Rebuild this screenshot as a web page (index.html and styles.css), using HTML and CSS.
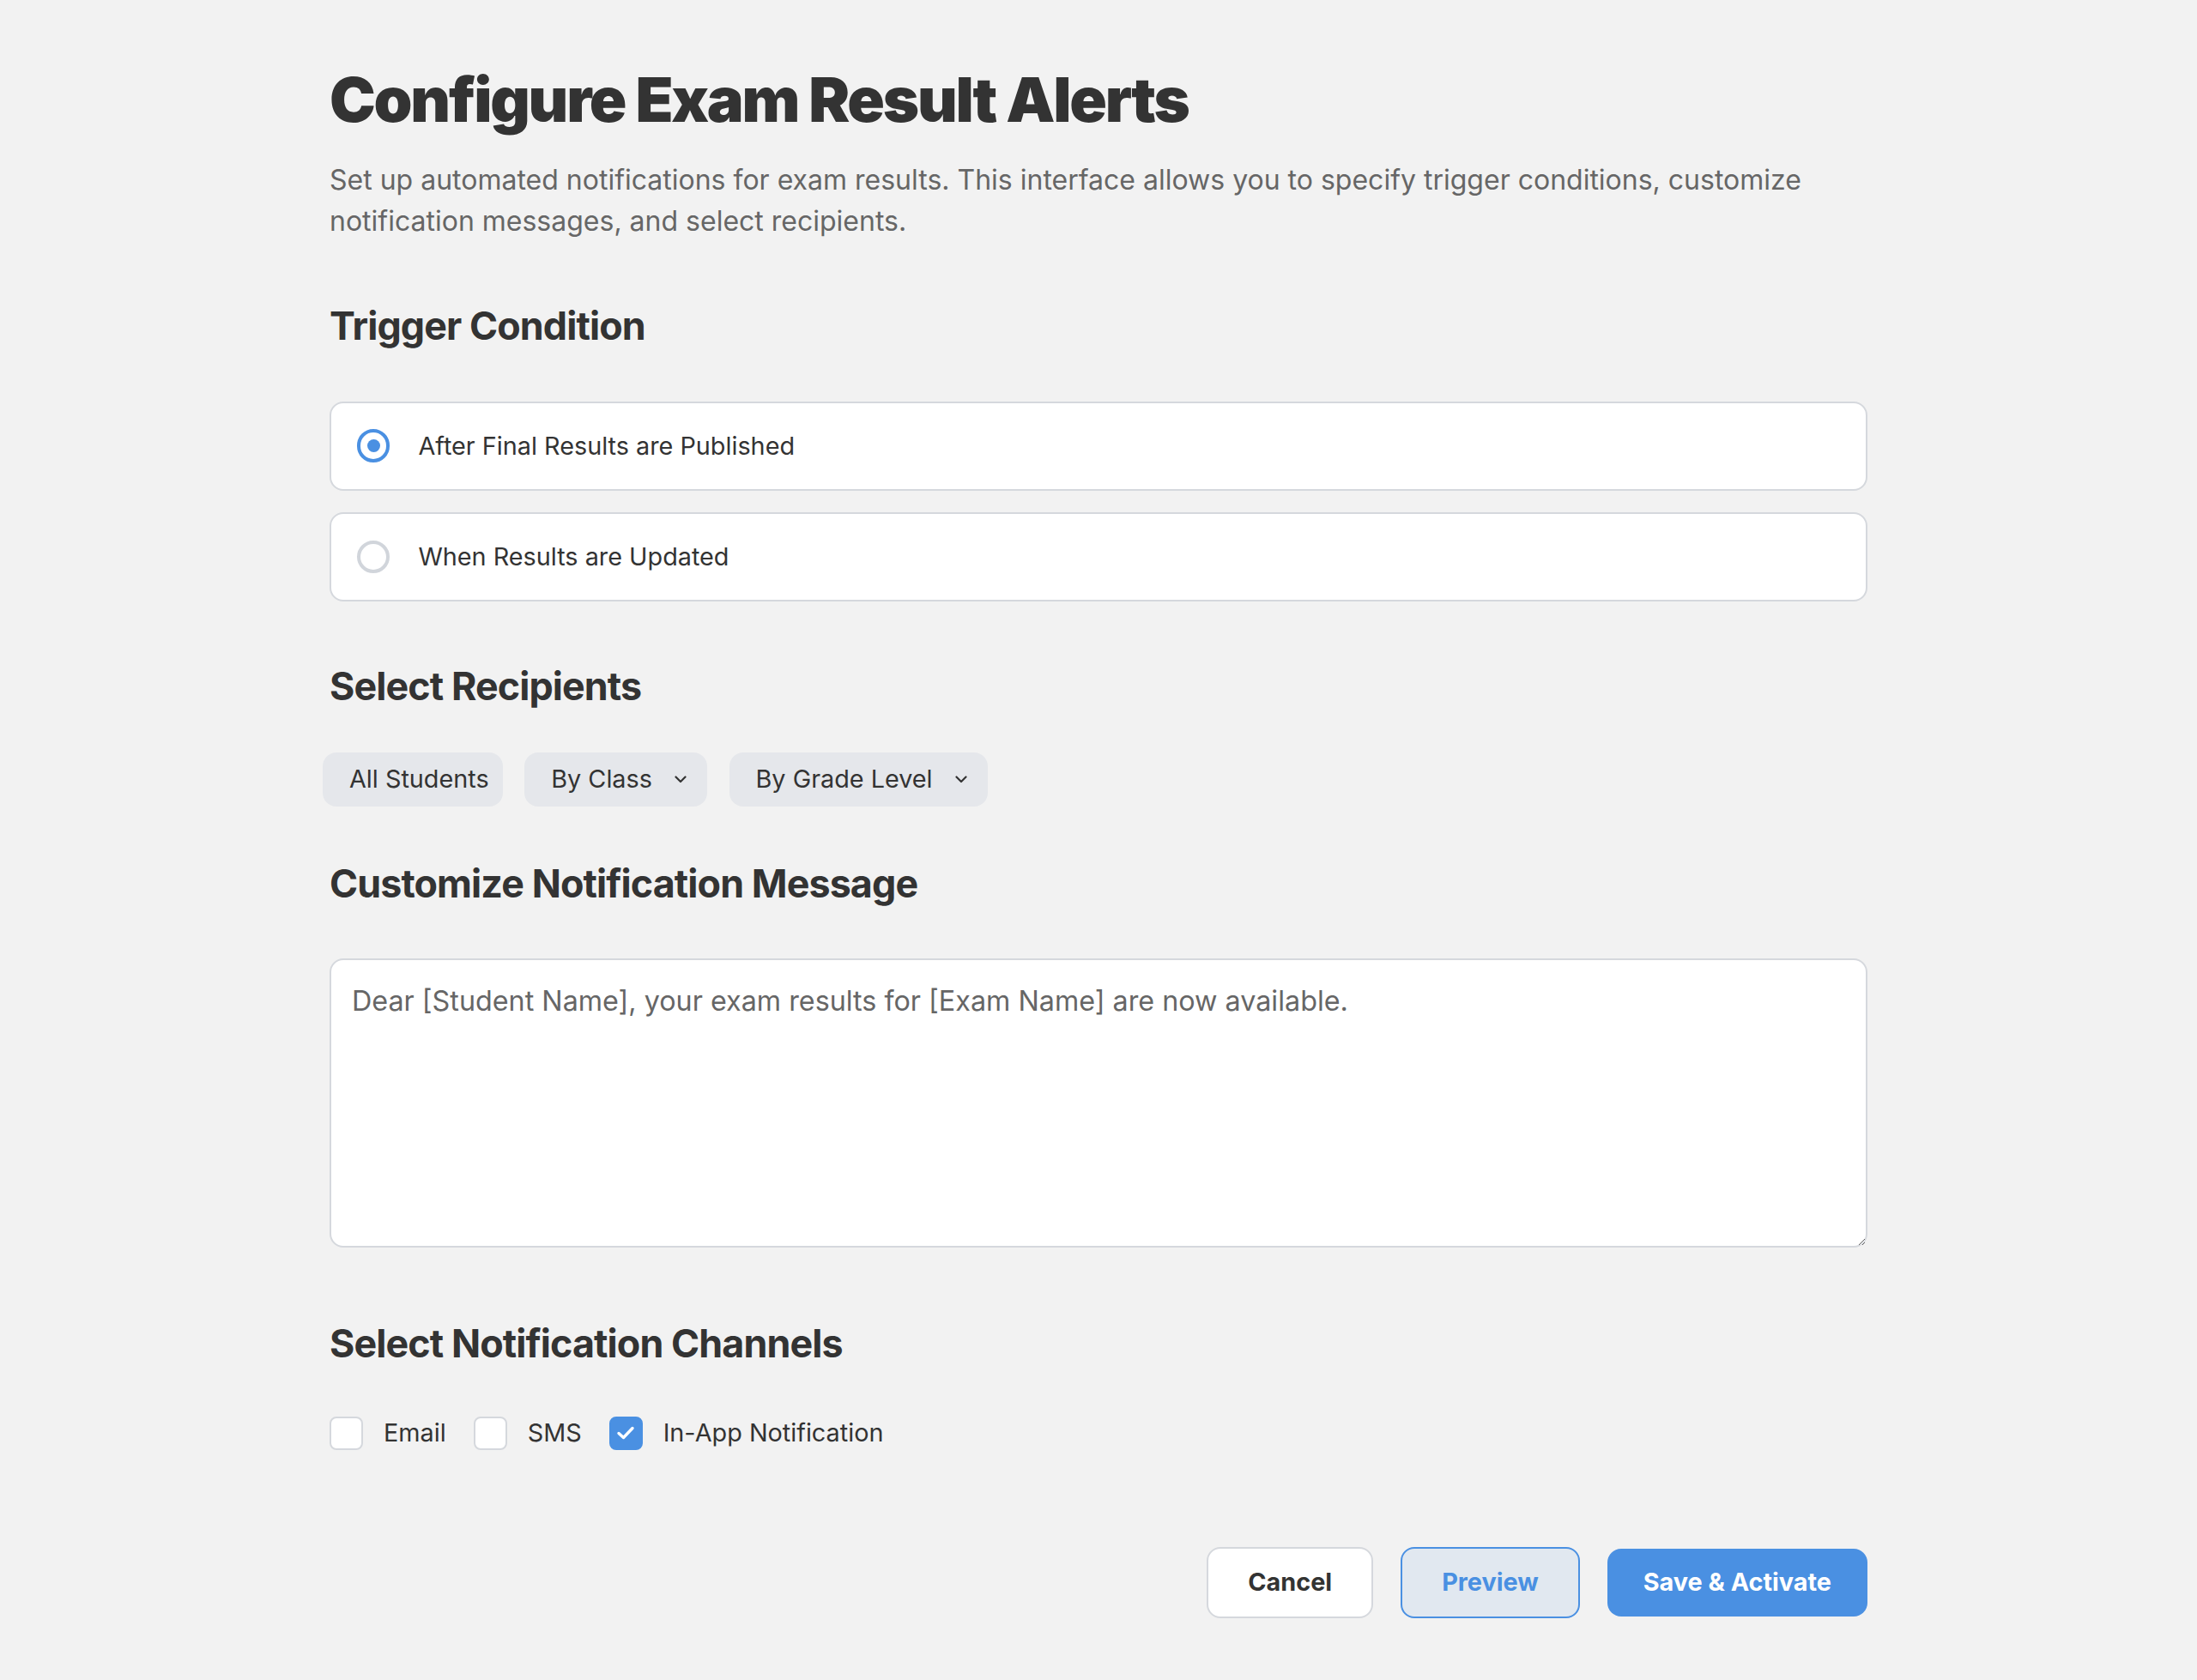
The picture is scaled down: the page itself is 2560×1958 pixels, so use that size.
FILE: index.html
```html
<!DOCTYPE html>
<html lang="en">
<head>
<meta charset="utf-8">
<title>Configure Exam Result Alerts</title>
<link rel="stylesheet" href="styles.css">
</head>
<body>
<main class="page">
  <h1 class="title">Configure Exam Result Alerts</h1>
  <p class="intro">Set up automated notifications for exam results. This interface allows you to specify trigger conditions, customize notification messages, and select recipients.</p>

  <section class="section section--trigger">
    <h2 class="section-title">Trigger Condition</h2>
    <div class="options">
      <label class="option">
        <span class="radio radio--checked"></span>
        <span class="option-label">After Final Results are Published</span>
      </label>
      <label class="option">
        <span class="radio"></span>
        <span class="option-label">When Results are Updated</span>
      </label>
    </div>
  </section>

  <section class="section section--recipients">
    <h2 class="section-title">Select Recipients</h2>
    <div class="chips">
      <button class="chip chip--plain" type="button">All Students</button>
      <button class="chip" type="button">By Class
        <svg class="chevron" width="14" height="9" viewBox="0 0 14 9"><path d="M1.5 1.5 L7 7 L12.5 1.5" fill="none" stroke="#333" stroke-width="2.2" stroke-linecap="round" stroke-linejoin="round"/></svg>
      </button>
      <button class="chip" type="button">By Grade Level
        <svg class="chevron" width="14" height="9" viewBox="0 0 14 9"><path d="M1.5 1.5 L7 7 L12.5 1.5" fill="none" stroke="#333" stroke-width="2.2" stroke-linecap="round" stroke-linejoin="round"/></svg>
      </button>
    </div>
  </section>

  <section class="section section--message">
    <h2 class="section-title">Customize Notification Message</h2>
    <textarea class="message">Dear [Student Name], your exam results for [Exam Name] are now available.</textarea>
  </section>

  <section class="section section--channels">
    <h2 class="section-title">Select Notification Channels</h2>
    <div class="channels">
      <label class="channel"><span class="checkbox"></span><span>Email</span></label>
      <label class="channel"><span class="checkbox"></span><span>SMS</span></label>
      <label class="channel"><span class="checkbox checkbox--checked"><svg width="22" height="18" viewBox="0 0 22 18"><path d="M3 9.5 L8.5 14.5 L19 3.5" fill="none" stroke="#fff" stroke-width="3.4" stroke-linecap="round" stroke-linejoin="round"/></svg></span><span>In-App Notification</span></label>
    </div>
  </section>

  <div class="actions">
    <button class="btn btn--cancel" type="button">Cancel</button>
    <button class="btn btn--preview" type="button">Preview</button>
    <button class="btn btn--primary" type="button">Save &amp; Activate</button>
  </div>
</main>
</body>
</html>
```

FILE: styles.css
```css
html, body {
  margin: 0;
  background: #f2f2f2;
}

body {
  font-family: "Inter", "Noto Sans", sans-serif;
  color: #333;
}

.page {
  width: 1792px;
  margin: 0 auto;
  padding: 73px 0 70px;
}

.title {
  font-size: 72px;
  font-weight: 900;
  line-height: 1.2;
  letter-spacing: -0.031em;
  margin: 0 0 27px;
}

.intro {
  font-size: 32px;
  line-height: 1.5;
  color: #666;
  margin: 0;
}

.section {
  margin-top: 72.25px;
}

.section--trigger {
  margin-top: 71.45px;
}

.section--message {
  margin-top: 63.85px;
}

.section--channels {
  margin-top: 85.85px;
}

.section-title {
  font-size: 44.8px;
  font-weight: 700;
  line-height: 1.2;
  letter-spacing: -0.02em;
  margin: 0 0 60px;
}

.section--recipients .section-title {
  margin-bottom: 49.4px;
}

.section--channels .section-title {
  margin-bottom: 53.4px;
}

.options {
  display: flex;
  flex-direction: column;
  gap: 25.6px;
}

.option {
  display: flex;
  align-items: center;
  gap: 33px;
  background: #fff;
  border: 2px solid #d5d8dd;
  border-radius: 16px;
  padding: 27px 30px;
  font-size: 28.8px;
  line-height: 1.6;
  color: #333;
}

.radio {
  flex: none;
  width: 38.4px;
  height: 38.4px;
  box-sizing: border-box;
  border: 4px solid #d1d5db;
  border-radius: 50%;
  display: flex;
  align-items: center;
  justify-content: center;
}

.radio--checked {
  border-color: #4a90e2;
}

.radio--checked::after {
  content: "";
  width: 15px;
  height: 15px;
  border-radius: 50%;
  background: #4a90e2;
}

.chips {
  display: flex;
  gap: 25.6px;
  margin-left: -8px;
}

.chip {
  display: flex;
  align-items: center;
  gap: 26px;
  background: #e5e7eb;
  border: 0;
  border-radius: 16px;
  padding: 8.5px 24px 8.5px 31px;
  font-family: inherit;
  font-size: 28.8px;
  line-height: 46px;
  color: #333;
}

.chip--plain {
  padding-right: 16px;
}

.chevron {
  flex: none;
  display: block;
}

.message {
  display: block;
  width: 100%;
  height: 337px;
  box-sizing: border-box;
  border: 2px solid #d5d8dd;
  border-radius: 16px;
  padding: 24px;
  background: #fff;
  font-family: inherit;
  font-size: 32.3px;
  line-height: 1.5;
  color: #666;
  resize: vertical;
  margin: 0;
}

.channels {
  display: flex;
  gap: 32px;
}

.channel {
  display: flex;
  align-items: center;
  gap: 24px;
  font-size: 28.8px;
  line-height: 1.6;
  color: #333;
}

.checkbox {
  flex: none;
  width: 39px;
  height: 39px;
  box-sizing: border-box;
  border: 2px solid #d5d8dd;
  border-radius: 8px;
  background: #fff;
}

.checkbox--checked {
  background: #4a90e2;
  border-color: #4a90e2;
  display: flex;
  align-items: center;
  justify-content: center;
}

.actions {
  display: flex;
  justify-content: flex-end;
  align-items: center;
  gap: 32px;
  margin-top: 109.9px;
}

.btn {
  font-family: inherit;
  font-size: 28.8px;
  font-weight: 700;
  line-height: 1.2;
  padding: 22px 46px;
  border-radius: 16px;
  border: 2px solid transparent;
}

.btn--cancel {
  background: #fff;
  border-color: #d5d8dd;
  color: #333;
}

.btn--preview {
  background: #e1e8f0;
  border-color: #4a90e2;
  color: #4a90e2;
}

.btn--primary {
  background: #4a90e2;
  border: 0;
  color: #fff;
  padding: 22px 42px;
}
```
